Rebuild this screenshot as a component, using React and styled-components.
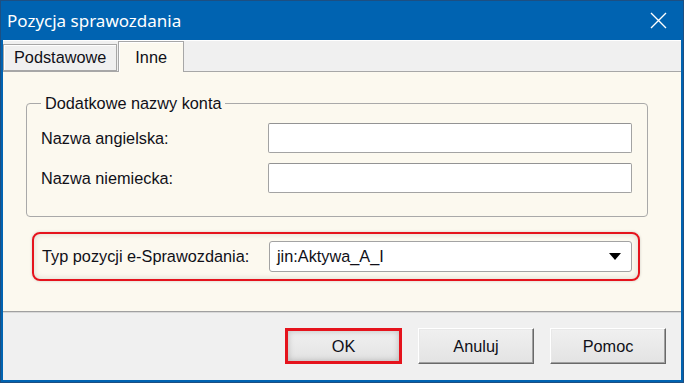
import React from "react";
import styled, { createGlobalStyle } from "styled-components";

const GlobalStyle = createGlobalStyle`
  html, body {
    margin: 0;
    padding: 0;
    background: #ffffff;
  }
  body {
    font-family: "Liberation Sans", Arial, sans-serif;
    color: #101018;
  }
`;

const Window = styled.div`
  width: 684px;
  height: 383px;
  box-sizing: border-box;
  border: 1px solid #1d4f82;
  background: #0063b1;
  padding: 0 2px 2px;
  display: flex;
  flex-direction: column;
`;

const TitleBar = styled.div`
  height: 39px;
  flex-shrink: 0;
  display: flex;
  align-items: center;
  justify-content: space-between;
  padding: 0 14px 0 4px;
  color: #ffffff;
  font-family: "Noto Sans", "Open Sans", sans-serif;
  font-size: 17px;
`;

const CloseIcon = styled.svg`
  width: 17px;
  height: 17px;
  display: block;
`;

const Body = styled.div`
  flex: 1;
  display: flex;
  flex-direction: column;
  background: #f0f0f0;
  border-top: 1px solid #ffffff;
  font-size: 16.3px;
`;

const TabRow = styled.div`
  height: 30px;
  display: flex;
  align-items: flex-end;
  position: relative;
  z-index: 1;
`;

const Tab = styled.div`
  box-sizing: border-box;
  height: ${(p) => (p.$active ? "31px" : "27px")};
  margin-bottom: ${(p) => (p.$active ? "-1px" : "0")};
  margin-left: ${(p) => (p.$active ? "1px" : "0")};
  padding: 0 ${(p) => (p.$active ? "16px" : "10px")};
  display: flex;
  align-items: center;
  background: ${(p) => (p.$active ? "#fcf9ef" : "#f0f0f0")};
  border: 1px solid #a7a7a7;
  border-bottom: ${(p) => (p.$active ? "none" : "1px solid #a7a7a7")};
  box-shadow: inset 1px 1px 0 #ffffff;
`;

const Panel = styled.div`
  flex: 1;
  background: #fcf9ef;
  border-top: 1px solid #a7a7a7;
  padding: 22px 33px 0 23px;
  display: flex;
  flex-direction: column;
`;

const GroupBox = styled.fieldset`
  margin: 0;
  min-inline-size: 0;
  padding: 11px 15px 23px 14px;
  border: 1px solid #a9a9a9;
  border-radius: 4px;
  display: flex;
  flex-direction: column;
  gap: 10px;
`;

const GroupTitle = styled.legend`
  padding: 0 4px;
  line-height: 18px;
`;

const FieldRow = styled.div`
  display: grid;
  grid-template-columns: 227px 1fr;
  align-items: center;
`;

const Label = styled.span`
  white-space: nowrap;
`;

const TextBox = styled.input`
  box-sizing: border-box;
  height: 30px;
  width: 100%;
  margin: 0;
  border: 1px solid #a3a3a3;
  border-top-color: #939393;
  border-radius: 2px;
  background: #ffffff;
  outline: none;
`;

const Highlight = styled.div`
  margin: 15px 8px 0 6px;
  padding: 7px 6px 7px 8px;
  border: 2px solid #e5131c;
  border-radius: 8px;
  box-shadow: inset 0 0 6px rgba(0, 0, 0, 0.14), 0 0 3px rgba(0, 0, 0, 0.18);
`;

const Select = styled.div`
  box-sizing: border-box;
  height: 31px;
  display: flex;
  align-items: center;
  justify-content: space-between;
  padding: 0 10px 0 7px;
  border: 1px solid #a3a3a3;
  border-radius: 3px;
  background: #ffffff;
`;

const Arrow = styled.svg`
  width: 12px;
  height: 7px;
  display: block;
`;

const Footer = styled.div`
  height: 69px;
  box-sizing: border-box;
  border-top: 1px solid #a0a0a0;
  box-shadow: inset 0 1px 0 #d9d9d9;
  display: flex;
  justify-content: flex-end;
  align-items: flex-start;
  gap: 16px;
  padding: 16px 15px 0 0;
`;

const Button = styled.div`
  box-sizing: border-box;
  width: ${(p) => (p.$focused ? "117px" : "116px")};
  height: 36px;
  display: flex;
  align-items: center;
  justify-content: center;
  background: linear-gradient(#f0f0f0, #e3e3e3);
  border: ${(p) => (p.$focused ? "3px solid #e5131c" : "1px solid #ffffff")};
  border-right-color: ${(p) => (p.$focused ? "#e5131c" : "#696969")};
  border-bottom-color: ${(p) => (p.$focused ? "#e5131c" : "#696969")};
  box-shadow: ${(p) =>
    p.$focused
      ? "inset 0 0 6px rgba(0, 0, 0, 0.22)"
      : "inset -1px -1px 0 #a0a0a0, inset 1px 1px 0 #e8e8e8"};
`;

export default function App() {
  return (
    <>
      <GlobalStyle />
      <Window>
        <TitleBar>
          <span>Pozycja sprawozdania</span>
          <CloseIcon viewBox="0 0 17 17">
            <path d="M1 1 L16 16 M16 1 L1 16" stroke="#ffffff" strokeWidth="1.4" fill="none" />
          </CloseIcon>
        </TitleBar>
        <Body>
          <TabRow>
            <Tab>Podstawowe</Tab>
            <Tab $active>Inne</Tab>
          </TabRow>
          <Panel>
            <GroupBox>
              <GroupTitle>Dodatkowe nazwy konta</GroupTitle>
              <FieldRow>
                <Label>Nazwa angielska:</Label>
                <TextBox readOnly defaultValue="" />
              </FieldRow>
              <FieldRow>
                <Label>Nazwa niemiecka:</Label>
                <TextBox readOnly defaultValue="" />
              </FieldRow>
            </GroupBox>
            <Highlight>
              <FieldRow>
                <Label>Typ pozycji e-Sprawozdania:</Label>
                <Select>
                  <span>jin:Aktywa_A_I</span>
                  <Arrow viewBox="0 0 12 7">
                    <polygon points="0,0 12,0 6,7" fill="#000000" />
                  </Arrow>
                </Select>
              </FieldRow>
            </Highlight>
          </Panel>
          <Footer>
            <Button $focused>OK</Button>
            <Button>Anuluj</Button>
            <Button>Pomoc</Button>
          </Footer>
        </Body>
      </Window>
    </>
  );
}
